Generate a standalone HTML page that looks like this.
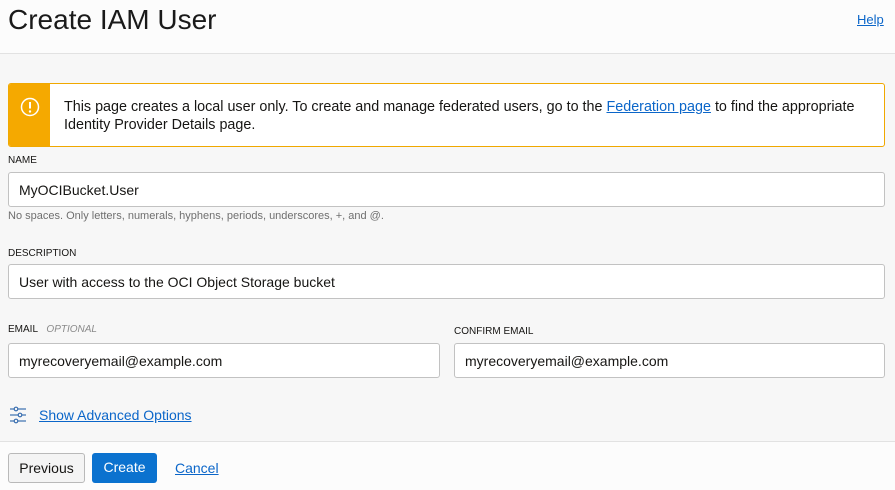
<!DOCTYPE html>
<html><head><style>
*{box-sizing:border-box;margin:0;padding:0}
body{width:895px;height:490px;background:#f7f7f7;font-family:"Liberation Sans",Arial,sans-serif;position:relative;overflow:hidden;color:#161513}
.a{position:absolute}
.hdr{left:0;top:0;width:895px;height:54px;background:#fcfcfc;border-bottom:1px solid #e2e2e2}
.ftr{left:0;top:441px;width:895px;height:49px;background:#fcfcfc;border-top:1px solid #e2e2e2}
h1{position:absolute;left:8px;top:4px;font-size:28px;font-weight:normal;color:#1a1a1a}
a{color:#0b66c9;text-decoration:underline}
.lbl{font-size:10px;color:#161513;text-transform:uppercase}
.inp{background:#fff;border:1px solid #c2c2c2;border-radius:3px;height:35px;font-size:14px;padding:9px 10px;color:#161513}
.btn{height:30px;border-radius:3px;font-size:14px;line-height:28px;text-align:center}
</style></head><body>
<div class="a hdr"><h1>Create IAM User</h1><a class="a" style="left:857px;top:12px;font-size:13px">Help</a></div>
<div class="a" style="left:8px;top:83px;width:877px;height:64px;background:#fff;border:1px solid #f0a800;border-radius:3px;overflow:hidden">
 <div class="a" style="left:0;top:0;width:41px;height:64px;background:#f5a900"></div>
 <svg class="a" style="left:11px;top:13px" width="20" height="20" viewBox="0 0 20 20"><circle cx="10" cy="10" r="8.5" fill="none" stroke="#fff" stroke-width="1.5"/><line x1="10" y1="5" x2="10" y2="11.5" stroke="#fff" stroke-width="2"/><circle cx="10" cy="14.5" r="1.2" fill="#fff"/></svg>
 <div class="a" style="left:55px;top:14px;font-size:14.35px;line-height:18px;color:#161513;white-space:nowrap">This page creates a local user only. To create and manage federated users, go to the <a>Federation page</a> to find the appropriate<br>Identity Provider Details page.</div>
</div>
<div class="a lbl" style="left:8px;top:155px">Name</div>
<div class="a inp" style="left:8px;top:172px;width:877px">MyOCIBucket.User</div>
<div class="a" style="left:8px;top:210px;font-size:11px;color:#6f6f6f">No spaces. Only letters, numerals, hyphens, periods, underscores, +, and @.</div>
<div class="a lbl" style="left:8px;top:248px">Description</div>
<div class="a inp" style="left:8px;top:264px;width:877px">User with access to the OCI Object Storage bucket</div>
<div class="a lbl" style="left:8px;top:324px">Email <span style="color:#8a8a8a;font-style:italic;margin-left:6px">Optional</span></div>
<div class="a inp" style="left:8px;top:343px;width:432px">myrecoveryemail@example.com</div>
<div class="a lbl" style="left:454px;top:326px">Confirm Email</div>
<div class="a inp" style="left:454px;top:343px;width:431px">myrecoveryemail@example.com</div>
<svg class="a" style="left:9px;top:406px" width="18" height="18" viewBox="0 0 18 18" fill="none" stroke="#3a6fb0" stroke-width="1.2"><line x1="1" y1="3" x2="5" y2="3"/><circle cx="7" cy="3" r="1.8"/><line x1="9" y1="3" x2="17" y2="3"/><line x1="1" y1="9" x2="9" y2="9"/><circle cx="11" cy="9" r="1.8"/><line x1="13" y1="9" x2="17" y2="9"/><line x1="1" y1="15" x2="5" y2="15"/><circle cx="7" cy="15" r="1.8"/><line x1="9" y1="15" x2="17" y2="15"/></svg>
<a class="a" style="left:39px;top:407px;font-size:14px">Show Advanced Options</a>
<div class="a ftr"></div>
<div class="a btn" style="left:8px;top:453px;width:77px;background:#f4f4f4;border:1px solid #b9b9b9;color:#161513">Previous</div>
<div class="a btn" style="left:92px;top:453px;width:65px;background:#0b72cf;color:#fff">Create</div>
<a class="a" style="left:175px;top:460px;font-size:14px">Cancel</a>
</body></html>
